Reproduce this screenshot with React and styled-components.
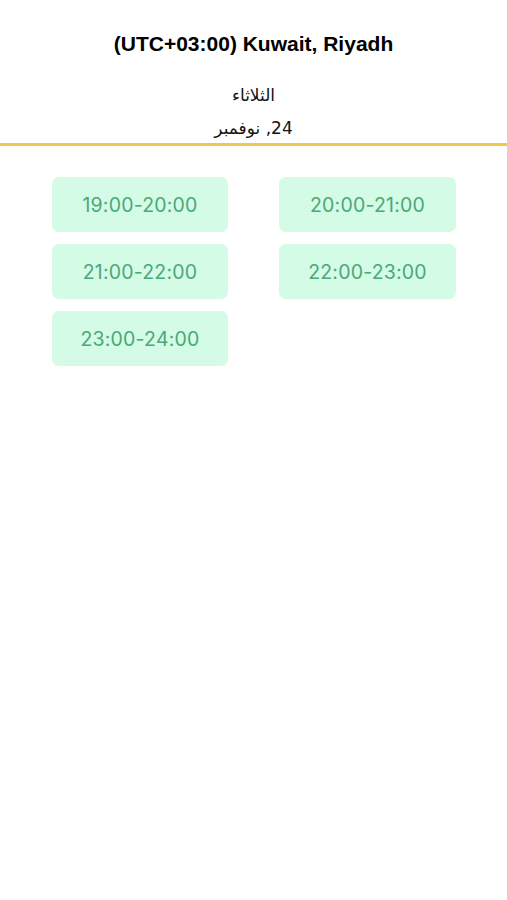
import React from "react";
import styled, { createGlobalStyle } from "styled-components";

const Global = createGlobalStyle`
  html, body { margin: 0; padding: 0; background: #ffffff; }
  body { font-family: "Liberation Sans", Arial, sans-serif; }
`;

const Page = styled.div`
  width: 507px;
  min-height: 900px;
  background: #fff;
`;

const Header = styled.header`
  display: flex;
  flex-direction: column;
  align-items: center;
  padding-top: 32px;
  padding-bottom: 4px;
  border-bottom: 3px solid #f1c84b;
`;

const Title = styled.h1`
  margin: 0;
  font-family: "Liberation Sans", Arial, sans-serif;
  font-weight: 700;
  font-size: 21px;
  line-height: 24px;
  color: #000;
`;

const DayLine = styled.div`
  margin-top: ${(p) => p.$gap}px;
  font-family: "DejaVu Sans", "Noto Sans", sans-serif;
  font-size: 17px;
  line-height: 22px;
  color: #111;
`;

const Grid = styled.div`
  display: grid;
  grid-template-columns: 176px 177px;
  column-gap: 51px;
  row-gap: 12px;
  padding: 31px 50px 0 52px;
`;

const Slot = styled.button`
  height: 55px;
  border: none;
  border-radius: 7px;
  background: #d3fbe6;
  color: #4aa879;
  font-family: Inter, "Noto Sans", sans-serif;
  font-size: 19.5px;
  font-weight: 400;
  letter-spacing: 0.2px;
  display: flex;
  align-items: center;
  justify-content: center;
  padding: 0;
  cursor: pointer;
`;

const slots = [
  "19:00-20:00",
  "20:00-21:00",
  "21:00-22:00",
  "22:00-23:00",
  "23:00-24:00",
];

export default function App() {
  return (
    <Page>
      <Global />
      <Header>
        <Title>(UTC+03:00) Kuwait, Riyadh</Title>
        <DayLine $gap={28} dir="rtl">الثلاثاء</DayLine>
        <DayLine $gap={11} dir="rtl">24, نوفمبر</DayLine>
      </Header>
      <Grid>
        {slots.map((s) => (
          <Slot key={s}>{s}</Slot>
        ))}
      </Grid>
    </Page>
  );
}
